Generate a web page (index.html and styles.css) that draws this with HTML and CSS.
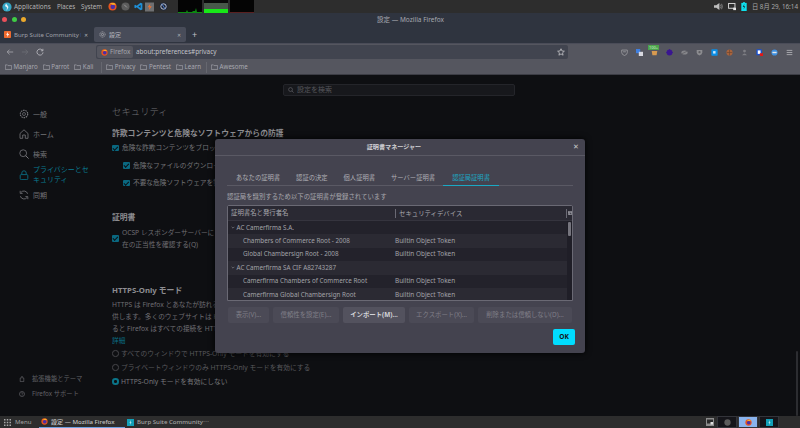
FILE: index.html
```html
<!DOCTYPE html>
<html lang="ja">
<head>
<meta charset="utf-8">
<title>設定 — Mozilla Firefox</title>
<link rel="stylesheet" href="styles.css">
</head>
<body>
<header class="panel">
  <svg class="ico13" viewBox="0 0 10 10"><circle cx="5" cy="5" r="4.6" fill="#35a6c4"/><path d="M4 1.5 6.5 5 4.5 9 5 5.5 3 4z" fill="#e8f4f6"/></svg>
  <span class="panel-menu apps">Applications</span><span class="panel-menu places">Places</span><span class="panel-menu system">System</span>
  <span class="panel-launchers">
    <svg class="ico9" viewBox="0 0 10 10"><circle cx="5" cy="5" r="4.5" fill="#e8541e"/><circle cx="5.3" cy="5.4" r="2.6" fill="#4a2fa8"/><path d="M2 1.5 5 3 8.5 3 7 1z" fill="#f9b32a"/></svg>
    <svg class="ico9" viewBox="0 0 10 10"><circle cx="5" cy="5" r="4.5" fill="#5c5c5c"/><path d="M3.5 3 6.5 6" stroke="#a0a0a0"/></svg>
    <svg class="ico9" viewBox="0 0 10 10"><path d="M7.3.8 9.3 1.8V8.2L7.3 9.2 3 5.8 1.3 7 .5 6.5V3.5L1.3 3 3 4.2zM7.3 3.2 4.8 5 7.3 6.8z" fill="#1e90d8"/></svg>
    <svg class="ico11" viewBox="0 0 10 10"><rect width="10" height="10" fill="#6e7072"/><path d="M6 1 3 5.2H5L4 9 7.5 4.3H5.4z" fill="#ee7030"/></svg>
    <svg class="ico9" viewBox="0 0 10 10"><circle cx="5" cy="5" r="4.5" fill="#20283a"/><circle cx="5" cy="5" r="3" fill="none" stroke="#c8d0e0"/><path d="M3 2 7 8" stroke="#4e7fd0"/></svg>
  </span>
  <span class="monitors">
    <svg class="monitor" viewBox="0 0 24 13"><rect width="24" height="13" fill="#040404"/><path d="M0 13V12H8L9 10 10 12H14L15 11H17L18 8 19 12H24V13z" fill="#0c8a10"/></svg>
    <svg class="monitor" viewBox="0 0 24 13"><rect width="24" height="13" fill="#0a0a0a"/><rect y="3" width="24" height="6" fill="#48584a"/><rect y="9" width="24" height="4" fill="#18e818"/></svg>
    <svg class="monitor" viewBox="0 0 24 13"><rect width="24" height="13" fill="#040404"/><rect y="12" width="24" height="1" fill="#5a2020"/></svg>
  </span>
  <span class="panel-tray">
    <svg class="ico9" viewBox="0 0 10 10"><path d="M0 3.5H2.5L6 1V9L2.5 6.5H0z" fill="#bdbdbd"/><path d="M7.2 3Q8.6 5 7.2 7M8.4 2Q10.2 5 8.4 8" stroke="#9a9a9a" fill="none" stroke-width=".8"/></svg>
    <svg class="ico9 wide" viewBox="0 0 10 10"><rect x=".7" y="1.2" width="8" height="6" fill="none" stroke="#d8d8d8" stroke-width="1.2"/><rect x="6.5" y="6.5" width="3.5" height="3" fill="#e8e8e8"/></svg>
    <svg class="ico9 narrow" viewBox="0 0 6 10"><rect y="1" width="6" height="9" fill="#0fe0ee"/><rect x="2" width="2" height="1" fill="#0fe0ee"/><path d="M3.4 2 1.6 5.6H3L2.6 8.4 4.4 4.8H3z" fill="#173c44"/></svg>
    <span class="clock">日 8月 29, 16:14</span>
  </span>
</header>

<section class="titlebar">
  <div class="title-row">
    <span class="lights"><i class="light red"></i><i class="light green"></i><i class="light yellow"></i></span>
    <span class="window-title">設定 — Mozilla Firefox</span>
  </div>
  <div class="tabs">
    <div class="tab">
      <svg class="ico7" viewBox="0 0 10 10"><rect width="10" height="10" rx="1" fill="#ee6a2e"/><path d="M6 1 3 5.2H5L4 9 7.5 4.3H5.4z" fill="#fff"/></svg>
      <span class="tab-label">Burp Suite Community E</span><span class="tab-x">✕</span>
    </div>
    <div class="tab active">
      <svg class="ico7" viewBox="0 0 10 10"><circle cx="5" cy="5" r="1.6" fill="none" stroke="#b8b8bd"/><circle cx="5" cy="5" r="3.8" fill="none" stroke="#b8b8bd" stroke-dasharray="1.6 .8"/></svg>
      <span class="tab-label">設定</span><span class="tab-x">✕</span>
    </div>
    <span class="new-tab">+</span>
  </div>
</section>

<section class="toolbar">
  <div class="nav">
    <svg class="nav-ico" viewBox="0 0 10 10"><path d="M9 5H1.5M4.5 2 1.5 5 4.5 8" fill="none" stroke="#a8a8ae"/></svg>
    <svg class="nav-ico" viewBox="0 0 10 10"><path d="M1 5H8.5M5.5 2 8.5 5 5.5 8" fill="none" stroke="#6d6e76"/></svg>
    <svg class="nav-ico" viewBox="0 0 10 10"><path d="M8.3 3.2A3.8 3.8 0 1 0 8.8 5.5M8.6 1V3.5H6.1" fill="none" stroke="#c0c0c6"/></svg>
    <div class="urlbar">
      <span class="identity">
        <svg class="ico7" viewBox="0 0 10 10"><circle cx="5" cy="5" r="4.5" fill="#e8541e"/><circle cx="5.3" cy="5.4" r="2.6" fill="#4a2fa8"/><path d="M2 1.5 5 3 8.5 3 7 1z" fill="#f9b32a"/></svg>
        Firefox
      </span>
      <span class="url">about:preferences#privacy</span>
      <svg class="star" viewBox="0 0 10 10"><path d="M5 .9 6.2 3.7 9.2 4 6.9 6 7.6 9 5 7.4 2.4 9 3.1 6 .8 4 3.8 3.7z" fill="none" stroke="#c4c4c8"/></svg>
    </div>
    <div class="addons">
      <svg class="addon" viewBox="0 0 10 10"><path d="M1 1.5H9V5Q9 8 5 9.3 1 8 1 5zM3 4H7" fill="none" stroke="#a8a8ac"/></svg>
      <svg class="addon" viewBox="0 0 10 10"><rect x="0" y="0" width="6" height="6" fill="#3f7fe0"/><rect x="4" y="4" width="6" height="6" fill="#d8d8e0"/></svg>
      <span class="addon-badge-wrap">
        <svg class="addon" viewBox="0 0 10 10"><path d="M1 3H9L8 9H2z" fill="#d89a50"/></svg>
        <span class="badge">100+</span>
      </span>
      <svg class="addon" viewBox="0 0 10 10"><circle cx="5" cy="5" r="4.2" fill="#3a1690"/><path d="M5 0V2M0 5H2M8 5H10" stroke="#3a1690"/></svg>
      <svg class="addon" viewBox="0 0 10 10"><ellipse cx="5" cy="5" rx="4.5" ry="3" fill="#85858a"/><path d="M1 7 9 3" stroke="#5c5c62"/></svg>
      <svg class="addon" viewBox="0 0 10 10"><path d="M1 1.5H9V5Q9 8 5 9.3 1 8 1 5z" fill="#8c8c90"/><circle cx="5" cy="4.6" r="1.6" fill="#5e5e62"/></svg>
      <svg class="addon" viewBox="0 0 10 10"><rect x=".5" y=".5" width="9" height="9" rx="1" fill="#0a8fe8"/><rect x="3" y="3" width="3.5" height="3.5" fill="#cfeaff"/></svg>
      <svg class="addon" viewBox="0 0 10 10"><circle cx="5" cy="5" r="4.4" fill="#a8633c"/><path d="M1 5H9M5 1V9" stroke="#6e4630"/></svg>
      <svg class="addon" viewBox="0 0 10 10"><circle cx="5" cy="3" r="2" fill="#7e7e84"/><path d="M1.5 9Q5 3.5 8.5 9z" fill="#7e7e84"/></svg>
      <svg class="addon" viewBox="0 0 10 10"><rect x=".5" y=".5" width="8" height="8.5" rx="1" fill="#1a52d0"/><rect x="2.5" y="2" width="4" height="5" fill="#fff"/><rect x="5.5" y="6" width="4.5" height="4" fill="#e01818"/></svg>
      <svg class="addon" viewBox="0 0 10 10"><circle cx="5" cy="5" r="4.4" fill="#3f90e0"/><path d="M2 4H8V6H2z" fill="#e8e8e8"/></svg>
      <svg class="addon" viewBox="0 0 10 10"><path d="M1 2H9M1 5H9M1 8H9" stroke="#c4c4c8" stroke-width="1"/></svg>
    </div>
  </div>
  <div class="bookmarks">
    <span class="bm"><svg class="folder" viewBox="0 0 10 8"><path d="M.5 7.5V1H3.5L4.5 2H9.5V7.5z" fill="none" stroke="#b4b4ba" stroke-width=".8"/></svg>Manjaro</span>
    <span class="bm"><svg class="folder" viewBox="0 0 10 8"><path d="M.5 7.5V1H3.5L4.5 2H9.5V7.5z" fill="none" stroke="#b4b4ba" stroke-width=".8"/></svg>Parrot</span>
    <span class="bm"><svg class="folder" viewBox="0 0 10 8"><path d="M.5 7.5V1H3.5L4.5 2H9.5V7.5z" fill="none" stroke="#b4b4ba" stroke-width=".8"/></svg>Kali</span>
    <i class="bm-sep wide"></i>
    <span class="bm"><svg class="folder" viewBox="0 0 10 8"><path d="M.5 7.5V1H3.5L4.5 2H9.5V7.5z" fill="none" stroke="#b4b4ba" stroke-width=".8"/></svg>Privacy</span>
    <span class="bm"><svg class="folder" viewBox="0 0 10 8"><path d="M.5 7.5V1H3.5L4.5 2H9.5V7.5z" fill="none" stroke="#b4b4ba" stroke-width=".8"/></svg>Pentest</span>
    <span class="bm"><svg class="folder" viewBox="0 0 10 8"><path d="M.5 7.5V1H3.5L4.5 2H9.5V7.5z" fill="none" stroke="#b4b4ba" stroke-width=".8"/></svg>Learn</span>
    <i class="bm-sep"></i>
    <span class="bm"><svg class="folder" viewBox="0 0 10 8"><path d="M.5 7.5V1H3.5L4.5 2H9.5V7.5z" fill="none" stroke="#b4b4ba" stroke-width=".8"/></svg>Awesome</span>
  </div>
</section>

<main class="page">
  <nav class="sidebar">
    <a class="side-item"><svg class="side-ico" viewBox="0 0 10 10"><circle cx="5" cy="5" r="1.5" fill="none" stroke="#77777c" stroke-width=".7"/><circle cx="5" cy="5" r="3.7" fill="none" stroke="#77777c" stroke-width="1.2" stroke-dasharray="1.5 .8"/></svg>一般</a>
    <a class="side-item"><svg class="side-ico" viewBox="0 0 10 10"><path d="M1 9.3V4.5L5 .8 9 4.5V9.3H6.3V6H3.7V9.3z" fill="none" stroke="#77777c" stroke-width=".8"/></svg>ホーム</a>
    <a class="side-item"><svg class="side-ico" viewBox="0 0 10 10"><circle cx="4.2" cy="4.2" r="3.4" fill="none" stroke="#77777c" stroke-width=".8"/><path d="M6.6 6.6 9.6 9.6" stroke="#77777c"/></svg>検索</a>
    <a class="side-item current"><svg class="side-ico" viewBox="0 0 10 10"><rect x="1.2" y="4.6" width="7.6" height="5" rx="1" fill="none" stroke="#0a6d83" stroke-width=".9"/><path d="M2.8 4.6V3A2.2 2.2 0 0 1 7.2 3V4.6" fill="none" stroke="#0a6d83" stroke-width=".9"/></svg><span>プライバシーとセ<br>キュリティ</span></a>
    <a class="side-item"><svg class="side-ico" viewBox="0 0 10 10"><path d="M8.6 3.8A3.8 3.8 0 0 0 2 2.4M1.4 6.2A3.8 3.8 0 0 0 8 7.6" fill="none" stroke="#77777c" stroke-width=".8"/><path d="M1.2 .8V3.4H3.6M8.8 9.2V6.6H6.4" fill="none" stroke="#77777c" stroke-width=".8"/></svg>同期</a>
    <div class="side-foot">
      <a class="foot-item"><svg class="foot-ico" viewBox="0 0 10 10"><path d="M2 9.3V3.5H3.8V2A1.2 1.2 0 0 1 6.2 2V3.5H8V9.3z" fill="none" stroke="#6e6e73"/></svg>拡張機能とテーマ</a>
      <a class="foot-item"><svg class="foot-ico" viewBox="0 0 10 10"><circle cx="5" cy="5" r="4.2" fill="none" stroke="#6e6e73"/><path d="M3.6 4A1.4 1.4 0 1 1 5 5.5V6.2M5 7V8" fill="none" stroke="#6e6e73" stroke-width=".8"/></svg>Firefox サポート</a>
    </div>
  </nav>

  <div class="content">
    <div class="search"><svg class="search-ico" viewBox="0 0 10 10"><circle cx="4.2" cy="4.2" r="3.2" fill="none" stroke="#6a6a70"/><path d="M6.6 6.6 9.4 9.4" stroke="#6a6a70"/></svg>設定を検索</div>
    <h1 class="sec-title">セキュリティ</h1>
    <h2 class="sub-title first">詐欺コンテンツと危険なソフトウェアからの防護</h2>
    <p class="check"><i class="box"></i>危険な詐欺コンテンツをブロック</p>
    <p class="check nested"><i class="box"></i>危険なファイルのダウンロード</p>
    <p class="check nested"><i class="box"></i>不要な危険ソフトウェアを警</p>
    <h2 class="sub-title cert">証明書</h2>
    <div class="check multi"><i class="box"></i><p class="para">OCSP レスポンダーサーバーに<br>在の正当性を確認する(Q)</p></div>
    <h2 class="sub-title https">HTTPS-Only モード</h2>
    <p class="para tight">HTTPS は Firefox とあなたが訪れる<br>供します。多くのウェブサイトは HTTPS<br>ると Firefox はすべての接続を HTTPS</p>
    <a class="more">詳細</a>
    <p class="radio"><i class="dot"></i>すべてのウィンドウで HTTPS-Only モードを有効にする</p>
    <p class="radio"><i class="dot"></i>プライベートウィンドウのみ HTTPS-Only モードを有効にする</p>
    <p class="radio on"><i class="dot"></i>HTTPS-Only モードを有効にしない</p>
  </div>
  <div class="page-scroll"><i class="page-thumb"></i></div>

  <div class="dialog">
    <div class="dlg-head"><span class="dlg-title">証明書マネージャー</span><span class="dlg-x">✕</span></div>
    <div class="dlg-tabs">
      <span class="dlg-tab first">あなたの証明書</span>
      <span class="dlg-tab">認証の決定</span>
      <span class="dlg-tab">個人証明書</span>
      <span class="dlg-tab">サーバー証明書</span>
      <span class="dlg-tab sel">認証局証明書</span>
    </div>
    <p class="dlg-desc">認証局を識別するため以下の証明書が登録されています</p>
    <div class="tree">
      <div class="tree-head"><span class="col1">証明書名と発行者名</span><span class="col2">セキュリティデバイス</span><span class="col3"><svg class="col-pick" viewBox="0 0 6 6"><path d="M.5.5H5.5V5.5H.5zM.5 2.5H5.5M2.5 2.5V5.5" fill="none" stroke="#b8b8c0"/></svg></span></div>
      <div class="tree-body">
        <div class="rows">
          <div class="row group"><svg class="twist" viewBox="0 0 6 4"><path d="M1 1 3 3 5 1" fill="none" stroke="#88888e"/></svg>AC Camerfirma S.A.</div>
          <div class="row alt"><span class="col1 leaf">Chambers of Commerce Root - 2008</span><span class="col2">Builtin Object Token</span></div>
          <div class="row"><span class="col1 leaf">Global Chambersign Root - 2008</span><span class="col2">Builtin Object Token</span></div>
          <div class="row group alt"><svg class="twist" viewBox="0 0 6 4"><path d="M1 1 3 3 5 1" fill="none" stroke="#88888e"/></svg>AC Camerfirma SA CIF A82743287</div>
          <div class="row"><span class="col1 leaf">Camerfirma Chambers of Commerce Root</span><span class="col2">Builtin Object Token</span></div>
          <div class="row alt"><span class="col1 leaf">Camerfirma Global Chambersign Root</span><span class="col2">Builtin Object Token</span></div>
        </div>
        <div class="tree-scroll"><i class="tree-thumb"></i></div>
      </div>
    </div>
    <div class="dlg-btns">
      <span class="btn w41">表示(V)...</span>
      <span class="btn w66">信頼性を設定(E)...</span>
      <span class="btn hot w62">インポート(M)...</span>
      <span class="btn w65">エクスポート(X)...</span>
      <span class="btn w94">削除または信頼しない(D)...</span>
    </div>
    <div class="dlg-foot"><span class="ok">OK</span></div>
  </div>
</main>

<footer class="taskbar">
  <svg class="menu-ico" viewBox="0 0 7 7"><path d="M0 0H1.5V1.5H0zM2.75 0H4.25V1.5H2.75zM5.5 0H7V1.5H5.5zM0 2.75H1.5V4.25H0zM2.75 2.75H4.25V4.25H2.75zM5.5 2.75H7V4.25H5.5zM0 5.5H1.5V7H0zM2.75 5.5H4.25V7H2.75zM5.5 5.5H7V7H5.5z" fill="#a8a8a8"/></svg>
  <span class="menu-label">Menu</span>
  <span class="task current">
    <svg class="ico7" viewBox="0 0 10 10"><circle cx="5" cy="5" r="4.5" fill="#e8541e"/><circle cx="5.3" cy="5.4" r="2.6" fill="#4a2fa8"/><path d="M2 1.5 5 3 8.5 3 7 1z" fill="#f9b32a"/></svg>
    設定 — Mozilla Firefox
  </span>
  <span class="task">
    <svg class="ico7" viewBox="0 0 10 10"><rect width="10" height="10" fill="#12a0b8"/><path d="M5.6 1.5 3.6 5.2H5L4.6 8.5 6.4 4.6H5z" fill="#e8f8fa"/></svg>
    Burp Suite Community⋯
  </span>
  <span class="task-tray">
    <svg class="show-desk" viewBox="0 0 8 8"><rect width="8" height="8" fill="#8c8c8c"/><rect x="1" y="1.5" width="6" height="4" fill="#2a2a2a"/><rect x="4.5" y="4" width="2.5" height="2.5" fill="#e0e0e0"/></svg>
    <span class="ws"><svg class="ico7" viewBox="0 0 10 10"><circle cx="5" cy="5" r="4.5" fill="#5c5c5c"/></svg></span>
    <span class="ws lit"><svg class="ico7" viewBox="0 0 10 10"><circle cx="5" cy="5" r="4.5" fill="#e8541e"/><circle cx="5.3" cy="5.4" r="2.6" fill="#4a2fa8"/><path d="M2 1.5 5 3 8.5 3 7 1z" fill="#f9b32a"/></svg></span>
    <span class="ws"><svg class="ico7" viewBox="0 0 10 10"><rect width="10" height="10" fill="#12a0b8"/><path d="M5.6 1.5 3.6 5.2H5L4.6 8.5 6.4 4.6H5z" fill="#e8f8fa"/></svg></span>
  </span>
</footer>
</body>
</html>
```
FILE: styles.css
```css
* { box-sizing: border-box; }
html, body { margin: 0; padding: 0; }
body {
  width: 800px; height: 428px; overflow: hidden;
  display: flex; flex-direction: column;
  background: #0e0f12; color: #8a8a8e;
  font-family: "Noto Sans", "Noto Sans CJK JP", sans-serif;
  font-size: 7px; line-height: 12px;
}
p, h1, h2 { margin: 0; font-weight: 400; }
svg { display: block; flex: none; }
i { display: block; }

.ico13 { width: 10px; height: 10px; margin: 0 0 0 2px; }
.ico11 { width: 9px; height: 10px; margin: 0 1px 0 -2px; }
.ico9 { width: 9px; height: 9px; }
.ico7 { width: 7px; height: 7px; }

.panel {
  height: 13px; flex: none; background: #2d2d2d; color: #b4b4b4;
  display: flex; align-items: center; font-size: 6.4px;
}
.panel-menu { flex: none; white-space: nowrap; }
.apps { width: 43px; margin-left: 2px; }
.places { width: 24px; font-size: 6.2px; }
.system { width: 21px; font-size: 6.2px; }
.panel-launchers { display: flex; align-items: center; gap: 4px; margin-left: 5.5px; }
.monitors { display: flex; gap: 2px; margin-left: 10.5px; align-self: stretch; }
.monitor { width: 24px; height: 13px; }
.panel-tray { display: flex; align-items: center; margin-left: auto; gap: 5px; padding-right: 2px; }
.panel-tray .wide { width: 8px; }
.panel-tray .narrow { width: 6px; height: 9px; }
.clock { font-size: 6.3px; color: #a8a8a8; }

.titlebar { height: 31px; flex: none; background: #2f343f; border-bottom: 1px solid #4a4c58; }
.title-row { height: 13px; display: flex; align-items: center; }
.lights { display: flex; gap: 4.5px; padding-left: 2px; }
.light { width: 5px; height: 5px; border-radius: 50%; }
.red { background: #e8505a; }
.green { background: #3fcc45; }
.yellow { background: #eba92c; }
.window-title { flex: 1; text-align: center; font-size: 6.5px; color: #a6a8b0; margin-left: -5px; }
.tabs { display: flex; align-items: center; height: 17px; padding-left: 3px; color: #a0a2aa; font-size: 6.1px; }
.tab { width: 87px; height: 15px; display: flex; align-items: center; gap: 3px; padding: 0 2px 0 1px; white-space: nowrap; overflow: hidden; }
.tab.active { width: 92px; margin-left: 4px; padding: 0 5px; background: #484c59; border-radius: 2px; color: #b6b8bf; }
.tab-label { flex: 1; min-width: 0; overflow: hidden; }
.tab-x { font-size: 5px; color: #b0b2b8; }
.new-tab { margin-left: 6px; font-size: 9px; color: #c0c2c8; }

.toolbar { height: 31px; flex: none; background: #55565f; border-bottom: 1px solid #3c3d45; display: flex; flex-direction: column; }
.nav { height: 16px; flex: none; display: flex; align-items: center; padding-left: 6px; }
.nav-ico { width: 8px; height: 8px; margin-right: 7px; }
.urlbar {
  width: 472px; height: 14px; margin-left: 45px; background: #41444f; border-radius: 2px;
  display: flex; align-items: center; padding: 0 3px 0 1px; color: #c0c2c8; font-size: 6.4px;
}
.identity { display: flex; align-items: center; gap: 2px; height: 12px; width: 36px; padding-left: 4px; background: #55565f; border-radius: 2px; color: #a4a5ad; }
.url { margin-left: 3px; flex: 1; }
.star { width: 8px; height: 8px; }
.addons { display: flex; align-items: center; gap: 8px; margin-left: 53px; }
.addon { width: 7px; height: 7px; }
.addon-badge-wrap { position: relative; display: block; }
.badge {
  position: absolute; left: -3px; top: -4px; width: 11px; height: 5px;
  background: #4ca24c; color: #c8f0c8; font-size: 4px; line-height: 5px; text-align: center;
}
.bookmarks { height: 14px; display: flex; align-items: center; padding-left: 5px; color: #a8a8b0; font-size: 6.2px; }
.bm { display: flex; align-items: center; gap: 1.5px; margin-right: 5px; }
.folder { width: 7px; height: 6px; }
.bm-sep { width: 1px; height: 11px; background: #66676f; margin-right: 4px; }
.bm-sep.wide { margin-left: 3px; }

.page { flex: 1; min-height: 0; position: relative; display: flex; }
.sidebar { width: 112px; flex: none; display: flex; flex-direction: column; padding: 29px 0 15px 19px; }
.side-item { display: flex; align-items: center; gap: 4px; height: 20px; color: #747478; font-size: 7px; line-height: 11px; }
.side-item.current { height: 22px; margin-bottom: -1px; color: #0a7c93; line-height: 10.5px; }
.side-ico { width: 10px; height: 10px; }
.side-foot { margin-top: auto; }
.foot-item { display: flex; align-items: center; gap: 7px; height: 14.5px; color: #616166; font-size: 6.3px; }
.foot-ico { width: 6px; height: 6px; }

.content { flex: 1; min-width: 0; white-space: nowrap; overflow: hidden; }
.search {
  width: 232px; height: 12px; margin: 9px 0 0 171px; padding-left: 4px; background: #17181c;
  border: 1px solid #24252a; border-radius: 2px; display: flex; align-items: center; gap: 3px;
  font-size: 7px; line-height: 10px; color: #56565b;
}
.search-ico { width: 6px; height: 6px; }
.sec-title { margin-top: 9px; height: 14px; line-height: 14px; font-size: 9.4px; color: #6f6f74; font-weight: 300; }
.sub-title { height: 12px; font-size: 7.8px; font-weight: 700; color: #8d8d91; }
.sub-title.first { margin-top: 8px; }
.sub-title.cert { margin-top: 21.5px; }
.sub-title.https { margin-top: 33px; }
.check { display: flex; align-items: center; gap: 3.5px; height: 12px; color: #747478; margin-top: 3px; font-size: 6.7px; }
.check.nested { margin-top: 5.5px; padding-left: 11px; }
.check.multi { height: 24px; margin-top: 4px; }
.box { width: 6.5px; height: 6.5px; flex: none; background: #0a6880; border-radius: 1px; display: flex; align-items: center; justify-content: center; }
.box::after { content: ""; width: 2px; height: 3.6px; border: solid #0b0c10; border-width: 0 1px 1px 0; transform: rotate(45deg) translate(-.3px, -.3px); }
.para { color: #6e6e72; font-size: 6.7px; line-height: 12px; }
.tight { margin-top: 3px; }
.more { display: block; height: 12px; color: #0a6d83; font-size: 6.7px; }
.radio { display: flex; align-items: center; gap: 2.5px; height: 14px; color: #58585c; font-size: 6.75px; }
.radio.on { color: #78787c; }
.dot { width: 6.5px; height: 6.5px; border-radius: 50%; border: 1px solid #46464a; flex: none; }
.radio.on .dot { border: 2px solid #0a7488; }
.page-scroll { width: 4px; flex: none; display: flex; align-items: flex-end; }
.page-thumb { width: 2px; height: 65px; background: #2c2d31; border-radius: 1px; }

.dialog {
  position: absolute; left: 215px; top: 64px; width: 370px; height: 214px;
  background: #44434f; border-radius: 3px; box-shadow: 0 0 6px #000;
  display: flex; flex-direction: column; padding: 0 12px; color: #b8b8bd;
}
.dlg-head {
  height: 17px; margin: 0 -12px; flex: none; border-bottom: 1px solid #5a5964; position: relative;
  display: flex; align-items: center; justify-content: center; padding-right: 12px;
}
.dlg-title { font-size: 6.1px; font-weight: 700; color: #d0d0d4; }
.dlg-x { position: absolute; right: 6px; font-size: 6.5px; color: #c8c8cc; }
.dlg-tabs { display: flex; height: 18px; margin-top: 12px; border-bottom: 1px solid #5a5964; font-size: 6.3px; color: #b0b0b6; flex: none; }
.dlg-tab { padding: 0 8px; line-height: 19px; white-space: nowrap; }
.dlg-tab.first { padding-left: 9px; }
.dlg-tab.sel { width: 56px; padding: 0; text-align: center; color: #1aa9c4; border-bottom: 1.5px solid #1aa9c4; height: 18px; line-height: 19px; }
.dlg-desc { margin-top: 5px; height: 12px; font-size: 6.4px; color: #a8a8ae; white-space: nowrap; flex: none; }
.tree { margin-top: 2px; height: 96px; flex: none; width: 346px; border: 1px solid #6a6974; border-radius: 2px 2px 0 0; background: #1f1e27; overflow: hidden; }
.tree-head { height: 15px; display: flex; align-items: center; background: #2a2933; border-bottom: 1px solid #35343e; font-size: 6.4px; color: #a8a8ae; }
.col1 { width: 167px; flex: none; white-space: nowrap; overflow: hidden; }
.tree-head .col1 { padding-left: 3px; }
.col2 { flex: 1; padding-left: 3px; white-space: nowrap; }
.tree-head .col2 { border-left: 1px solid #6a6974; height: 9px; line-height: 9px; }
.col3 { width: 6px; border-left: 1px solid #6a6974; height: 9px; display: flex; align-items: center; justify-content: center; }
.col-pick { width: 4px; height: 4px; }
.tree-body { display: flex; height: 79px; }
.rows { flex: 1; min-width: 0; }
.row { height: 13.4px; display: flex; align-items: center; font-size: 6.3px; color: #a2a2a8; background: #23222b; white-space: nowrap; }
.row.alt { background: #2b2a33; }
.row.group { padding-left: 3px; gap: 1.5px; }
.twist { width: 4px; height: 3px; }
.row .col1 { width: 167px; padding-left: 15px; }
.row .col2 { padding-left: 0; font-size: 6.4px; }
.tree-scroll { width: 5px; flex: none; background: #1f1e27; padding: 1px 1px 0; }
.tree-thumb { width: 3px; height: 14px; background: #76757e; border-radius: 1px; }
.dlg-btns { display: flex; gap: 4px; margin-top: 6px; height: 16px; flex: none; padding-left: 1px; }
.btn { height: 16px; border-radius: 2px; background: #4b4a56; color: #807f88; font-size: 6.4px; line-height: 16px; text-align: center; white-space: nowrap; }
.btn.hot { background: #53525e; color: #d4d4d8; font-weight: 700; }
.w41 { width: 41px; }
.w66 { width: 66px; }
.w62 { width: 62px; }
.w65 { width: 65px; }
.w94 { width: 94px; }
.dlg-foot { display: flex; justify-content: flex-end; margin-top: 6px; margin-right: -2px; }
.ok { width: 22px; height: 16px; border-radius: 2px; background: #00ddff; color: #15141a; font-size: 6.6px; font-weight: 700; line-height: 16px; text-align: center; }

.taskbar { height: 12px; flex: none; background: #2d2d2d; display: flex; align-items: center; color: #a4a4a4; font-size: 6.1px; padding-left: 4px; }
.menu-ico { width: 7px; height: 7px; }
.menu-label { margin-left: 4px; width: 24px; }
.task { height: 12px; width: 86px; display: flex; align-items: center; gap: 3px; padding-left: 2px; white-space: nowrap; font-weight: 500; }
.task.current { border-bottom: 1px solid #6ea0e0; color: #c0c0c0; }
.task-tray { margin-left: auto; display: flex; align-items: center; height: 12px; padding-right: 21px; gap: 1px; }
.show-desk { width: 8px; height: 8px; margin-right: 2px; }
.ws { width: 20px; height: 12px; background: #15151a; border: 1px solid #33343a; display: flex; align-items: center; justify-content: center; }
.ws.lit { background: #8ab4ee; }
```
